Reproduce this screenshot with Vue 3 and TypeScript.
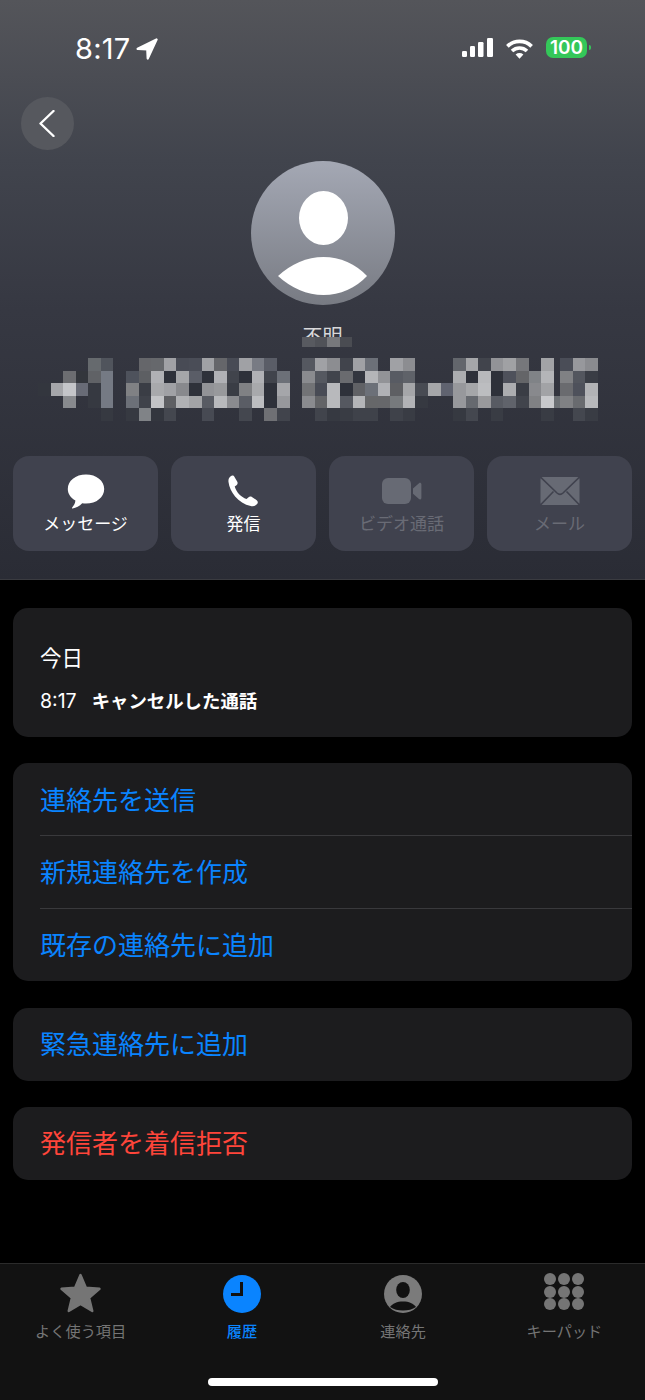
<script setup lang="ts">
type Cells = Record<number, string>;

// blurred phone number, one map per row: column -> grey
const mosaicRows: Cells[] = [
	{ 4: "666a6e", 5: "50545c", 8: "65666a", 9: "66686c", 10: "a0a1a5", 11: "484b55", 12: "4a4d57", 13: "a0a1a5", 14: "65666a", 15: "484b55", 16: "a0a1a5", 17: "787b84", 18: "5a5d67", 21: "555860", 22: "a0a1a5", 23: "8c8d91", 24: "41444c", 25: "a0a1a5", 26: "6c7078", 28: "a0a1a5", 29: "8c8d91", 33: "63666c", 34: "a5a6a9", 35: "41444c", 36: "929397", 37: "a0a1a4", 38: "76777b", 40: "a2a3a6", 42: "4a4d57", 43: "97989c", 44: "8a8b8f" },
	{ 2: "6c6d71", 3: "33363c", 4: "606266", 5: "757a84", 7: "4e525c", 8: "5d5f63", 9: "b0b1b5", 10: "2e313a", 11: "a5a6a9", 12: "5a5d67", 13: "2e313a", 14: "b0b1b5", 15: "41444c", 16: "2e313a", 17: "b0b1b5", 18: "41444c", 19: "6c7078", 21: "8a8b8f", 22: "555860", 23: "41444c", 24: "6a6b6f", 25: "33363f", 26: "b4b5b8", 27: "929397", 28: "585b63", 29: "5f6269", 33: "acadb0", 34: "2e313a", 35: "b8b9bc", 36: "2e313a", 37: "4e515b", 38: "646568", 39: "808387", 40: "b4b5b8", 42: "808184", 43: "53565e", 44: "3a3d45" },
	{ 0: "33363e", 1: "a5a6aa", 2: "c4c5c9", 3: "686b76", 4: "363941", 5: "757a84", 7: "808184", 8: "3a3d45", 9: "a8a9ac", 10: "a0a1a5", 11: "88898d", 12: "2e313a", 13: "929397", 14: "98999c", 15: "3a3d45", 16: "808184", 17: "a8a9ac", 18: "2e313a", 19: "a5a6aa", 21: "727376", 22: "484b55", 23: "b8b9bc", 24: "2e313a", 25: "606165", 26: "6c7078", 27: "b0b1b5", 28: "5e5f63", 29: "a5a6a9", 30: "484b53", 31: "a5a6a9", 32: "606370", 33: "97989c", 34: "a5a6a9", 35: "bcbdc0", 36: "2e313a", 37: "acadb0", 38: "3a3d45", 39: "88898d", 40: "a2a3a6", 42: "6a6b6f", 43: "4e515b", 44: "b2b3b6" },
	{ 2: "888a8e", 4: "363941", 5: "757a84", 7: "6c7078", 8: "3f424a", 9: "c2c3c6", 10: "5e5f63", 11: "b0b1b4", 12: "a2a3a6", 13: "585b63", 14: "b8b9bc", 15: "8a8b8f", 16: "5a5d65", 17: "bcbdc0", 18: "2e313a", 19: "97989c", 21: "8a8b8f", 22: "636467", 23: "b8b9bc", 24: "555860", 25: "b4b5b8", 26: "666769", 27: "66676a", 28: "777a7d", 29: "b2b3b6", 30: "363941", 33: "97989c", 34: "66696f", 35: "99999c", 36: "585b63", 37: "60636b", 38: "41444c", 39: "808184", 40: "c8c9cc", 41: "6c7074", 42: "808184", 43: "696b6f", 44: "b8b9bc" },
	{ 5: "363941", 7: "363941", 8: "808387", 9: "33363e", 10: "44474f", 13: "474a53", 16: "44474f", 18: "6f7074", 19: "41444c", 22: "41444c", 23: "363941", 24: "393c44", 25: "3f424a", 26: "3f424a", 28: "3f424a", 29: "393c44", 33: "363941", 34: "44474f", 36: "393c44", 40: "393c44", 43: "44474f", 44: "393c44" },
];

const colX = (c: number) => (c >= 42 ? 560 + 12.67 * (c - 42) : 38 + 12.58 * c);
const colEnd = (c: number) => (c === 41 ? 560 : colX(c + 1));
const rowY = (r: number) => 12.6 * r;

const mosaicRects = mosaicRows.flatMap((row, r) =>
	Object.entries(row).map(([col, grey]) => {
		const c = Number(col);
		const x = Math.round(colX(c));
		const y = Math.round(rowY(r));
		return {
			key: `${r}-${c}`,
			x,
			y,
			w: Math.round(colEnd(c)) - x,
			h: Math.round(rowY(r + 1)) - y,
			fill: `#${grey}`,
		};
	}),
);

const nameCells = ["#585a60", "#505258", "#77787c", "#4a4c52"];

const sections = [
	{ items: ["連絡先を送信", "新規連絡先を作成", "既存の連絡先に追加"], danger: false },
	{ items: ["緊急連絡先に追加"], danger: false },
	{ items: ["発信者を着信拒否"], danger: true },
];

const keypadDots = [550, 564, 578].flatMap((x) =>
	[6, 19, 31].map((y) => ({ cx: x - 544, cy: y })),
);
</script>

<template>
	<div class="phone">
		<header class="head">
			<div class="status">
				<span class="time">8:17</span>
				<svg class="locate" width="22" height="22" viewBox="0 0 21 21">
					<path d="M19.6 1.4 L1.6 10.4 L10.8 10.8 L11.2 19.6 Z" fill="#fff" stroke="#fff" stroke-width="2.2" stroke-linejoin="round" />
				</svg>
				<span class="status-gap"></span>
				<svg width="32" height="20" viewBox="0 0 32 20">
					<rect x="0" y="13" width="5" height="6" rx="1.2" fill="#fff" />
					<rect x="8" y="8" width="5" height="11" rx="1.2" fill="#fff" />
					<rect x="16" y="4" width="5.5" height="15" rx="1.2" fill="#fff" />
					<rect x="25" y="0" width="6" height="19" rx="1.2" fill="#fff" />
				</svg>
				<svg class="wifi" width="27" height="20" viewBox="0 0 27 20">
					<path d="M1.4 7.4 C8 0.8 19 0.8 25.6 7.4" fill="none" stroke="#fff" stroke-width="3.7" />
					<path d="M6 12 C10.4 8 16.6 8 21 12" fill="none" stroke="#fff" stroke-width="3.7" />
					<path d="M9.6 15.4 C12 13.6 15 13.6 17.4 15.4 L13.5 19.8 Z" fill="#fff" />
				</svg>
				<div class="battery">100</div>
				<span class="battery-nub"></span>
			</div>

			<div class="nav">
				<button class="back">
					<svg width="18" height="27" viewBox="0 0 18 27">
						<path d="M15.5 1 L2.5 13.5 L15.5 26" fill="none" stroke="#fff" stroke-width="2.4" stroke-linecap="round" stroke-linejoin="round" />
					</svg>
				</button>
			</div>

			<div class="avatar">
				<svg width="144" height="144" viewBox="0 0 144 144">
					<ellipse cx="72.5" cy="57" rx="24.5" ry="27" fill="#fff" />
					<path d="M27 115 C40 103 56 96 72.5 96 C89 96 105 103 116 115 C105 127 89 134 72.5 134 C56 134 40 127 27 115 Z" fill="#fff" />
				</svg>
			</div>

			<div class="name">
				<span>不明</span>
				<div class="name-mosaic">
					<i v-for="c in nameCells" :key="c" :style="{ background: c }"></i>
				</div>
			</div>

			<svg class="number" width="645" height="63" viewBox="0 0 645 63">
				<rect
					v-for="r in mosaicRects"
					:key="r.key"
					:x="r.x"
					:y="r.y"
					:width="r.w"
					:height="r.h"
					:fill="r.fill"
				/>
			</svg>

			<div class="actions">
				<div class="action">
					<svg width="38" height="35" viewBox="0 0 38 35">
						<path d="M19 0.5 C29.5 0.5 37.2 6.8 37.2 15 C37.2 23.2 29.5 29.6 19 29.6 C17.6 29.6 16.4 29.5 15.2 29.3 C12.6 32 9 34 5.6 34.4 C5 34.4 4.8 33.8 5.2 33.4 C7 31.6 8.2 29.3 8.4 26.6 C3.6 24 0.8 19.8 0.8 15 C0.8 6.8 8.5 0.5 19 0.5 Z" fill="#fff" />
					</svg>
					<span>メッセージ</span>
				</div>
				<div class="action">
					<svg width="38" height="35" viewBox="0 0 38 35">
						<path transform="translate(-2.5 0)" d="M8.2 2.2 C9.6 1.2 11.2 1.5 12 2.9 L14.8 7.8 C15.5 9.1 15.1 10.3 14 11.2 L12.2 12.6 C13 15.4 14.6 18 16.6 20.2 C18.8 22.4 21.2 24 24 25 L25.8 23.4 C26.8 22.4 28.2 22.1 29.4 22.9 L34.2 26.2 C35.6 27.1 35.6 28.8 34.6 30 C33 31.8 30.8 32.6 28.2 32 C22 30.6 16.6 27.2 12.6 22.4 C9 18.2 6.6 13.2 6 8 C5.7 5.6 6.4 3.4 8.2 2.2 Z" fill="#fff" />
					</svg>
					<span>発信</span>
				</div>
				<div class="action off">
					<svg width="40" height="35" viewBox="0 0 40 35">
						<rect x="0" y="4" width="29" height="26" rx="6" fill="#676a74" />
						<path d="M31 14.5 L37 9.2 C38 8.4 39.4 9 39.4 10.4 L39.4 24 C39.4 25.3 38 26 37 25.1 L31 19.8 Z" fill="#676a74" />
					</svg>
					<span>ビデオ通話</span>
				</div>
				<div class="action off">
					<svg width="40" height="35" viewBox="0 0 40 35">
						<rect x="0.5" y="3" width="39" height="28" rx="2" fill="#676a74" />
						<path d="M0.5 3 L17 19 C18.8 20.6 21.2 20.6 23 19 L39.5 3 M0.5 31 L13.5 17.5 M39.5 31 L26.5 17.5" fill="none" stroke="#40424e" stroke-width="1.6" />
					</svg>
					<span>メール</span>
				</div>
			</div>
		</header>

		<main class="body">
			<section class="card log">
				<div class="log-day">今日</div>
				<div class="log-line">
					<span class="log-time">8:17</span>
					<span class="log-kind">キャンセルした通話</span>
				</div>
			</section>

			<section v-for="(s, i) in sections" :key="i" class="card">
				<div v-for="item in s.items" :key="item" class="row" :class="{ danger: s.danger, solo: s.items.length === 1 }">
					{{ item }}
				</div>
			</section>
		</main>

		<footer class="tabs">
			<div class="tab-row">
				<div class="tab">
					<svg width="44" height="40" viewBox="0 0 44 40">
						<path d="M22 2 L27.4 14.6 L41 15.8 L30.6 24.8 L33.8 38 L22 31 L10.2 38 L13.4 24.8 L3 15.8 L16.6 14.6 Z" transform="translate(-0.5 0)" fill="#757575" stroke="#757575" stroke-width="2.4" stroke-linejoin="round" />
					</svg>
					<span>よく使う項目</span>
				</div>
				<div class="tab on">
					<svg width="44" height="40" viewBox="0 0 44 40">
						<circle cx="22" cy="21" r="19" fill="#0a84ff" />
						<path d="M21.5 9 L21.5 21.5 L11 21.5" fill="none" stroke="#111" stroke-width="3" />
					</svg>
					<span>履歴</span>
				</div>
				<div class="tab">
					<svg width="44" height="40" viewBox="0 0 44 40">
						<circle cx="22" cy="21" r="19" fill="#7b7b7b" />
						<ellipse cx="22" cy="17" rx="6.8" ry="8" fill="#111" />
						<path d="M9 34 C11.5 30.5 16 28.5 22 28.5 C28 28.5 32.5 30.5 35 34 C31.5 36.5 27 37.5 22 37.5 C17 37.5 12.5 36.5 9 34 Z" fill="#111" />
					</svg>
					<span>連絡先</span>
				</div>
				<div class="tab">
					<svg width="40" height="40" viewBox="0 0 40 40">
						<circle v-for="d in keypadDots" :key="`${d.cx}-${d.cy}`" :cx="d.cx" :cy="d.cy" r="6" fill="#757575" />
					</svg>
					<span>キーパッド</span>
				</div>
			</div>
			<div class="home-bar"></div>
		</footer>
	</div>
</template>

<style scoped>
.phone {
	width: 645px;
	height: 1400px;
	display: flex;
	flex-direction: column;
	background: #000;
	color: #fff;
	font-family: Inter, "Noto Sans CJK JP", sans-serif;
	overflow: hidden;
}
.head {
	height: 580px;
	box-sizing: border-box;
	border-bottom: 1px solid #3a3b40;
	display: flex;
	flex-direction: column;
	background: linear-gradient(180deg, #54555a 0, #41444d 160px, #363842 310px, #2a2c35 579px);
}
.status {
	height: 97px;
	box-sizing: border-box;
	padding: 38px 54px 0 75px;
	display: flex;
	align-items: flex-start;
}
.time {
	font-size: 29px;
	line-height: 21px;
	font-weight: 400;
	letter-spacing: 0.2px;
}
.locate {
	margin-left: 6px;
}
.status-gap {
	flex: 1;
}
.wifi {
	margin-left: 12px;
	margin-top: 1px;
}
.battery {
	margin-left: 13px;
	margin-top: -1px;
	width: 41px;
	height: 21px;
	border-radius: 7px;
	background: #34c759;
	text-align: center;
	font-size: 19px;
	line-height: 21px;
	font-weight: 600;
}
.battery-nub {
	width: 2px;
	height: 5px;
	margin: 7px 0 0 2px;
	background: #34c759;
	border-radius: 0 2px 2px 0;
}
.nav {
	padding-left: 21px;
}
.back {
	width: 53px;
	height: 53px;
	padding: 0;
	border: 0;
	border-radius: 50%;
	background: #56585e;
	display: flex;
	align-items: center;
	justify-content: center;
}
.back svg {
	margin-left: -1px;
}
.avatar {
	width: 144px;
	height: 144px;
	margin: 11px auto 0;
	border-radius: 50%;
	background: linear-gradient(180deg, #a4a8b4, #787b83);
}
.avatar svg {
	display: block;
}
.name {
	position: relative;
	height: 20px;
	margin-top: 22px;
	text-align: center;
	font-size: 20px;
	line-height: 20px;
	color: #d8d8da;
}
.name-mosaic {
	position: absolute;
	left: 302px;
	top: 10px;
	display: flex;
}
.name-mosaic i {
	width: 12.5px;
	height: 10px;
}
.number {
	display: block;
	margin-top: 11px;
}
.actions {
	margin-top: 35px;
	padding: 0 13px;
	display: grid;
	grid-template-columns: repeat(4, 145px);
	gap: 13px;
}
.action {
	height: 95px;
	border-radius: 16px;
	background: #40424e;
	display: flex;
	flex-direction: column;
	align-items: center;
	padding-top: 18px;
	box-sizing: border-box;
	font-size: 17px;
	line-height: 22px;
}
.action svg {
	display: block;
	margin-bottom: 4px;
}
.action.off {
	color: #696b75;
}
.body {
	flex: 1;
	padding: 28px 13px 0;
	display: flex;
	flex-direction: column;
	gap: 26.3px;
}
.card {
	background: #1c1c1e;
	border-radius: 15px;
	overflow: hidden;
}
.log {
	height: 129px;
	box-sizing: border-box;
	padding: 35px 27px 0;
}
.log-day {
	font-size: 21.5px;
	line-height: 30px;
}
.log-line {
	margin-top: 14px;
	display: flex;
	align-items: center;
	gap: 15px;
	line-height: 28px;
}
.log-time {
	font-size: 19.5px;
}
.log-kind {
	font-size: 18.4px;
	font-weight: 700;
}
.row {
	position: relative;
	height: 72.67px;
	box-sizing: border-box;
	padding: 0 0 3px 27px;
	display: flex;
	align-items: center;
	font-size: 26px;
	color: #0a84ff;
}
.row.solo {
	height: 73px;
}
.row + .row::before {
	content: "";
	position: absolute;
	left: 27px;
	right: 0;
	top: -1px;
	height: 1px;
	background: #39393c;
}
.row.danger {
	color: #ff453a;
}
.tabs {
	height: 137px;
	box-sizing: border-box;
	border-top: 1px solid #2b2b2b;
	background: #121212;
	display: flex;
	flex-direction: column;
	align-items: center;
}
.tab-row {
	align-self: stretch;
	display: grid;
	grid-template-columns: repeat(4, 161.25px);
	padding-top: 9px;
}
.tab {
	display: flex;
	flex-direction: column;
	align-items: center;
	font-size: 15.2px;
	line-height: 18px;
	color: #757575;
}
.tab svg {
	display: block;
	margin-bottom: 10px;
}
.tab.on {
	color: #0a84ff;
	font-weight: 500;
}
.home-bar {
	width: 230px;
	height: 8px;
	margin-top: 37px;
	border-radius: 4px;
	background: #fff;
}
</style>

<style>
html,
body {
	background: #000;
}
</style>
